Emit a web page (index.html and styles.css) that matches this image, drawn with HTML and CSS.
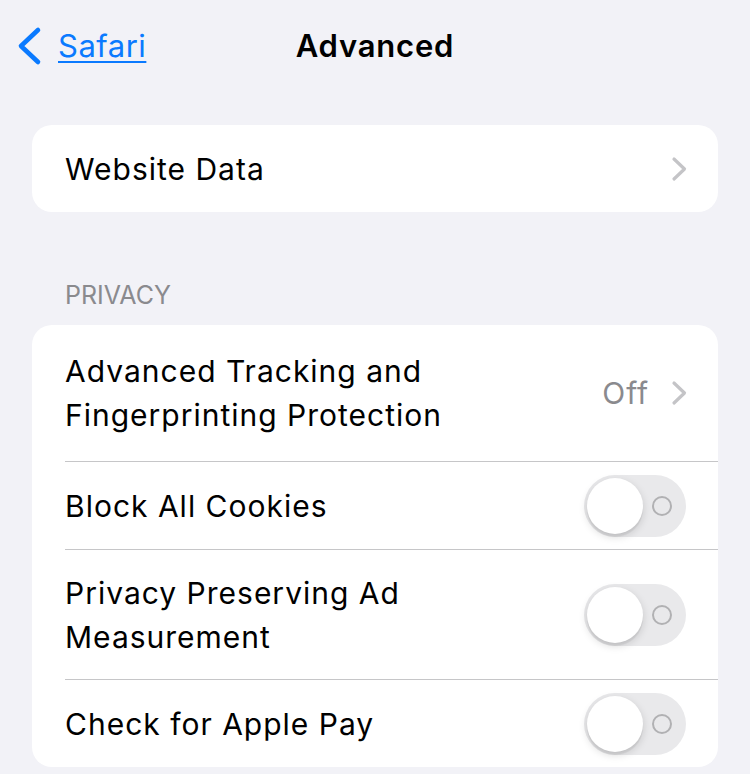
FILE: index.html
```html
<!DOCTYPE html>
<html lang="en">
<head>
<meta charset="utf-8">
<title>Advanced</title>
<link rel="stylesheet" href="styles.css">
</head>
<body>
<header class="nav">
  <a class="back" href="#">
    <svg class="back-icon" width="26" height="40" viewBox="0 0 26 40" aria-hidden="true">
      <polyline points="21,4 4,20 21,36" fill="none" stroke="currentColor" stroke-width="4.6" stroke-linecap="round" stroke-linejoin="round"/>
    </svg>
    <span class="back-label">Safari</span>
  </a>
  <h1 class="title">Advanced</h1>
  <span class="nav-spacer"></span>
</header>

<main class="content">
  <section class="group">
    <div class="row">
      <span class="label">Website Data</span>
      <span class="accessory">
        <svg class="chev" width="18" height="26" viewBox="0 0 18 26" aria-hidden="true">
          <polyline points="4,3 14.5,13 4,23" fill="none" stroke="currentColor" stroke-width="3.2" stroke-linecap="round" stroke-linejoin="round"/>
        </svg>
      </span>
    </div>
  </section>

  <h2 class="section-title">PRIVACY</h2>
  <section class="group">
    <div class="row row-tall">
      <span class="label">Advanced Tracking and<br>Fingerprinting Protection</span>
      <span class="accessory">
        <span class="value">Off</span>
        <svg class="chev" width="18" height="26" viewBox="0 0 18 26" aria-hidden="true">
          <polyline points="4,3 14.5,13 4,23" fill="none" stroke="currentColor" stroke-width="3.2" stroke-linecap="round" stroke-linejoin="round"/>
        </svg>
      </span>
    </div>
    <div class="row">
      <span class="label">Block All Cookies</span>
      <span class="toggle"><span class="knob"></span><span class="off-mark"></span></span>
    </div>
    <div class="row row-tall row-tall-b">
      <span class="label">Privacy Preserving Ad<br>Measurement</span>
      <span class="toggle"><span class="knob"></span><span class="off-mark"></span></span>
    </div>
    <div class="row">
      <span class="label">Check for Apple Pay</span>
      <span class="toggle"><span class="knob"></span><span class="off-mark"></span></span>
    </div>
  </section>
</main>
</body>
</html>
```

FILE: styles.css
```css
* { box-sizing: border-box; }

html, body {
  margin: 0;
  padding: 0;
  background: #f2f2f7;
}

body {
  font-family: Inter, "Noto Sans", "Liberation Sans", sans-serif;
  color: #000;
  width: 750px;
  height: 774px;
  overflow: hidden;
}

.nav {
  height: 92px;
  display: grid;
  grid-template-columns: 1fr auto 1fr;
  align-items: center;
}

.back {
  display: flex;
  align-items: center;
  gap: 15px;
  padding-left: 17px;
  color: #0a7aff;
  text-decoration: none;
  justify-self: start;
}

.back-icon { display: block; }

.back-label {
  font-size: 31px;
  line-height: 40px;
  text-decoration: underline;
  text-decoration-thickness: 2px;
  text-underline-offset: 4px;
  letter-spacing: 0.5px;
}

.title {
  margin: 0;
  font-size: 31px;
  line-height: 40px;
  font-weight: 600;
  letter-spacing: 0.8px;
}

.content {
  padding: 33px 32px 0;
}

.group {
  background: #fff;
  border-radius: 20px;
  overflow: hidden;
}

.row {
  display: flex;
  align-items: center;
  justify-content: space-between;
  padding: 22px 32px 21px 33px;
}

.row + .row {
  border-top: 1px solid #c6c6c8;
  margin-left: 33px;
  padding-left: 0;
}

.row-tall { padding-top: 24px; padding-bottom: 24px; }
.row-tall-b { padding-top: 21px; padding-bottom: 20px; }

.label {
  font-size: 30px;
  line-height: 44px;
  letter-spacing: 1px;
}

.accessory {
  display: flex;
  align-items: center;
  gap: 21px;
  margin-right: -2px;
}

.value {
  font-size: 30px;
  line-height: 44px;
  color: #8a8a8e;
  letter-spacing: 0.9px;
}

.chev {
  display: block;
  color: #c4c4c7;
}

.section-title {
  margin: 68px 0 15px 33px;
  font-size: 25px;
  line-height: 30px;
  font-weight: 400;
  color: #8a8a8e;
  letter-spacing: 0;
}

.toggle {
  width: 102px;
  height: 62px;
  margin: -9px 0;
  border-radius: 31px;
  background: #e9e9eb;
  padding: 3px;
  display: flex;
  align-items: center;
  flex-shrink: 0;
}

.knob {
  width: 56px;
  height: 56px;
  border-radius: 50%;
  background: #fff;
  box-shadow: 0 3px 8px rgba(0, 0, 0, 0.15), 0 3px 1px rgba(0, 0, 0, 0.06);
}

.off-mark {
  width: 20px;
  height: 20px;
  margin-left: 9px;
  border-radius: 50%;
  border: 2px solid #b1b1b3;
}
```
